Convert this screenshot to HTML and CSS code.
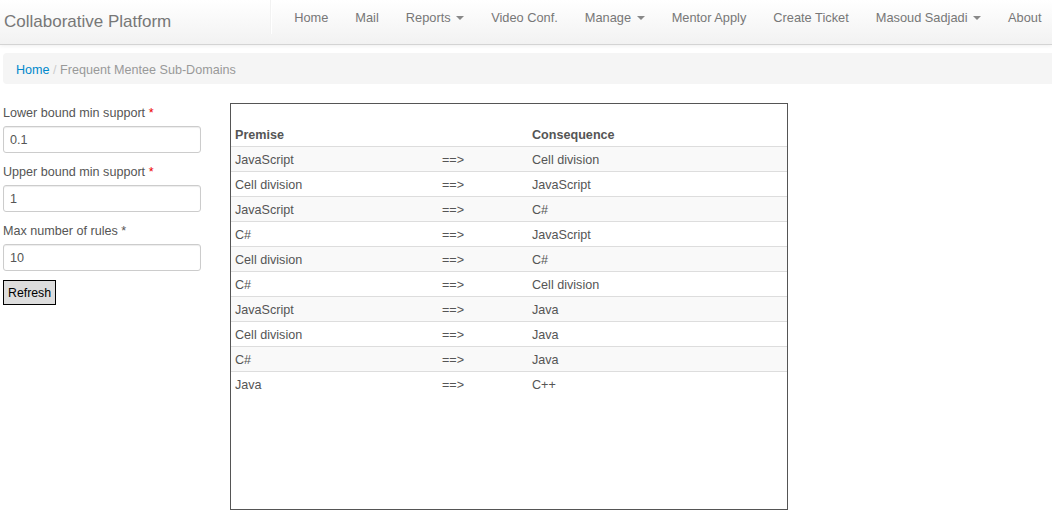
FILE: index.html
```html
<!DOCTYPE html>
<html>
<head>
<meta charset="utf-8">
<link rel="stylesheet" href="styles.css">
</head>
<body>
<header class="navbar">
  <div class="brand">Collaborative Platform</div>
  <nav class="nav">
    <span class="divider"></span>
    <a class="nav-link">Home</a>
    <a class="nav-link">Mail</a>
    <a class="nav-link">Reports <b class="caret"></b></a>
    <a class="nav-link">Video Conf.</a>
    <a class="nav-link">Manage <b class="caret"></b></a>
    <a class="nav-link">Mentor Apply</a>
    <a class="nav-link">Create Ticket</a>
    <a class="nav-link">Masoud Sadjadi <b class="caret"></b></a>
    <a class="nav-link">About</a>
  </nav>
</header>
<main class="main">
  <div class="breadcrumb"><a class="crumb-link">Home</a> <span class="sep">/</span> <span class="crumb-active">Frequent Mentee Sub-Domains</span></div>
  <div class="content">
    <form class="form">
      <label class="label">Lower bound min support <span class="req">*</span></label>
      <input class="input" type="text" value="0.1">
      <label class="label">Upper bound min support <span class="req">*</span></label>
      <input class="input" type="text" value="1">
      <label class="label">Max number of rules <span class="req2">*</span></label>
      <input class="input" type="text" value="10">
      <button class="btn" type="button">Refresh</button>
    </form>
    <div class="box">
      <table class="table">
        <thead>
          <tr><th class="c1">Premise</th><th class="c2"></th><th>Consequence</th></tr>
        </thead>
        <tbody>
          <tr><td>JavaScript</td><td>==&gt;</td><td>Cell division</td></tr>
          <tr><td>Cell division</td><td>==&gt;</td><td>JavaScript</td></tr>
          <tr><td>JavaScript</td><td>==&gt;</td><td>C#</td></tr>
          <tr><td>C#</td><td>==&gt;</td><td>JavaScript</td></tr>
          <tr><td>Cell division</td><td>==&gt;</td><td>C#</td></tr>
          <tr><td>C#</td><td>==&gt;</td><td>Cell division</td></tr>
          <tr><td>JavaScript</td><td>==&gt;</td><td>Java</td></tr>
          <tr><td>Cell division</td><td>==&gt;</td><td>Java</td></tr>
          <tr><td>C#</td><td>==&gt;</td><td>Java</td></tr>
          <tr><td>Java</td><td>==&gt;</td><td>C++</td></tr>
        </tbody>
      </table>
    </div>
  </div>
</main>
</body>
</html>
```

FILE: styles.css
```css
* { box-sizing: border-box; }
html, body { margin: 0; padding: 0; background: #fff; overflow: hidden; }
body {
  font-family: "Liberation Sans", Arial, sans-serif;
  font-size: 12.6px;
  line-height: 18px;
  color: #555;
}
.navbar {
  height: 45px;
  display: flex;
  align-items: flex-start;
  background: linear-gradient(to bottom, #ffffff, #f2f2f2);
  border-bottom: 1px solid #d4d4d4;
  box-shadow: 0 1px 4px rgba(0,0,0,0.065);
}
.brand {
  padding: 12px 0 0 4px;
  font-size: 17px;
  line-height: 20px;
  color: #777;
}
.nav {
  margin-left: auto;
  display: flex;
  align-items: flex-start;
  margin-right: -3px;
}
.divider {
  width: 2px;
  height: 34px;
  margin: 0 9px;
  border-left: 1px solid #f2f2f2;
  border-right: 1px solid #fff;
}
.nav-link {
  padding: 9px 13.5px 0;
  font-size: 12.8px;
  line-height: 18px;
  color: #777;
  white-space: nowrap;
}
.caret {
  display: inline-block;
  width: 0;
  height: 0;
  vertical-align: middle;
  margin-top: -2px;
  margin-left: 2px;
  border-top: 4px solid #888;
  border-left: 4px solid transparent;
  border-right: 4px solid transparent;
}
.main { padding-left: 3px; }
.breadcrumb {
  margin: 8px -6px 19px 0;
  height: 31px;
  padding: 8px 13px 5px;
  background: #f5f5f5;
  border-radius: 4px;
  color: #999;
}
.crumb-link { color: #0088cc; }
.sep { color: #ccc; }
.crumb-active { color: #999; }
.content {
  display: flex;
  align-items: flex-start;
  gap: 29px;
}
.form {
  width: 198px;
  display: flex;
  flex-direction: column;
  align-items: flex-start;
}
.label {
  line-height: 18px;
  padding-top: 1px;
  height: 18px;
  margin-bottom: 5px;
  color: #555;
}
.req { color: #e00; }
.req2 { color: #555; }
.input {
  width: 198px;
  height: 27px;
  margin: 0 0 9px;
  padding: 4px 6px;
  font-family: "Liberation Sans", Arial, sans-serif;
  font-size: 12.6px;
  color: #555;
  border: 1px solid #ccc;
  border-radius: 3px;
  box-shadow: inset 0 1px 1px rgba(0,0,0,0.075);
  background: #fff;
}
.btn {
  height: 25px;
  margin: 0;
  padding: 0 4px;
  font-family: "Liberation Sans", Arial, sans-serif;
  font-size: 12.3px;
  color: #000;
  background: #dddddd;
  border: 1px solid #000;
  border-radius: 0;
}
.box {
  width: 558px;
  height: 407px;
  border: 1px solid #555;
  padding-top: 18px;
}
.table {
  width: 100%;
  border-collapse: collapse;
  border-spacing: 0;
}
.table th, .table td {
  padding: 5px 4px 2px;
  line-height: 17px;
  text-align: left;
  vertical-align: top;
  border-top: 1px solid #dddddd;
}
.table thead th {
  border-top: 0;
  font-weight: bold;
  color: #555;
}
.c1 { width: 207px; }
.c2 { width: 90px; }
.table tbody tr:nth-child(odd) td { background: #f9f9f9; }
```
